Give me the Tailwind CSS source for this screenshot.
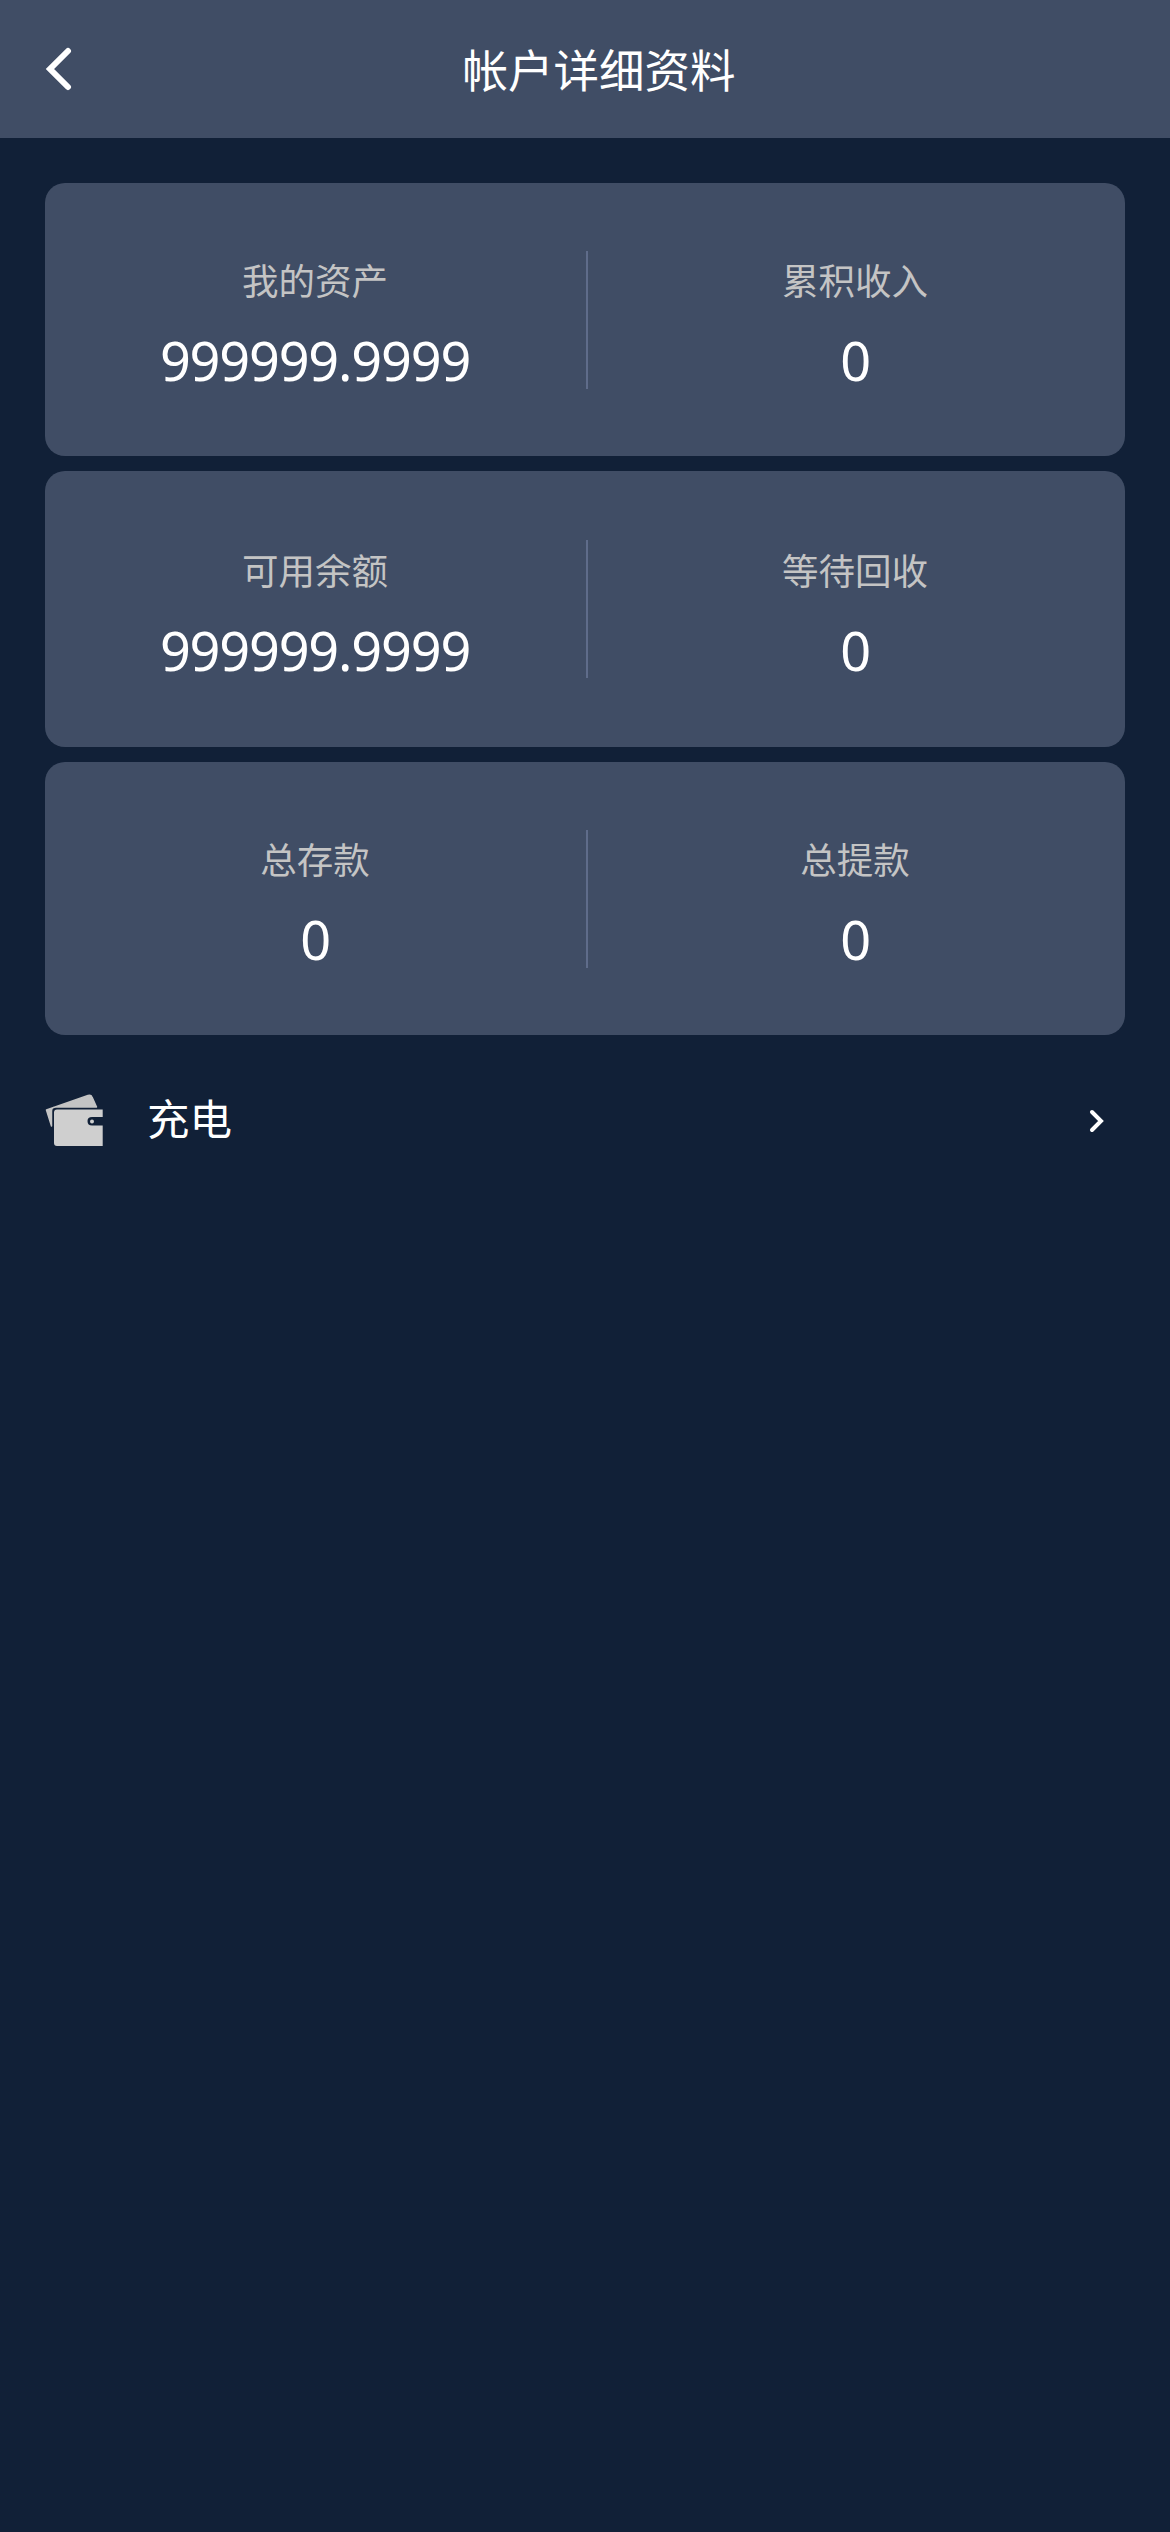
<!DOCTYPE html>
<html lang="zh-CN">
<head>
    <meta charset="UTF-8">
    <meta name="viewport" content="width=device-width, initial-scale=1.0">
    <title>帐户详细资料</title>
    <script src="https://cdn.jsdelivr.net/npm/@tailwindcss/browser@4"></script>
</head>
<body class="bg-[#112037] font-['Noto_Sans','Noto_Sans_CJK_SC',sans-serif]">
    <div class="w-[1170px] h-[2532px] bg-[#112037] overflow-hidden">
        <!-- Header -->
        <header class="h-[138px] bg-[#404d65] flex items-center px-[45px]">
            <svg class="w-[28px] h-[44px] shrink-0" viewBox="0 0 28 44" fill="none" stroke="#fff" stroke-width="6" stroke-linecap="round" stroke-linejoin="miter">
                <path d="M23 4 L5 22 L23 40"/>
            </svg>
            <h1 class="flex-1 text-center text-[45.5px] leading-[60px] text-white font-normal mt-[2px]">帐户详细资料</h1>
        </header>

        <!-- Stat cards -->
        <main class="px-[45px] pt-[45px] flex flex-col gap-[15px]">
            <section class="h-[273px] bg-[#404d65] rounded-[20px] flex items-center">
                <div class="flex-1 text-center pt-[13px]">
                    <p class="text-[36.5px] leading-[50px] text-[#c4c4c4]">我的资产</p>
                    <p class="text-[54px] tracking-[-1.2px] leading-[72px] mt-[18px] text-white">999999.9999</p>
                </div>
                <div class="w-[2px] h-[138px] ml-[1px] -mr-[3px] bg-[#5f6c8a]"></div>
                <div class="flex-1 text-center pt-[13px]">
                    <p class="text-[36.5px] leading-[50px] text-[#c4c4c4]">累积收入</p>
                    <p class="text-[54px] tracking-[-1.2px] leading-[72px] mt-[18px] text-white">0</p>
                </div>
            </section>
            <section class="h-[276px] bg-[#404d65] rounded-[20px] flex items-center">
                <div class="flex-1 text-center pt-[13px]">
                    <p class="text-[36.5px] leading-[50px] text-[#c4c4c4]">可用余额</p>
                    <p class="text-[54px] tracking-[-1.2px] leading-[72px] mt-[18px] text-white">999999.9999</p>
                </div>
                <div class="w-[2px] h-[138px] ml-[1px] -mr-[3px] bg-[#5f6c8a]"></div>
                <div class="flex-1 text-center pt-[13px]">
                    <p class="text-[36.5px] leading-[50px] text-[#c4c4c4]">等待回收</p>
                    <p class="text-[54px] tracking-[-1.2px] leading-[72px] mt-[18px] text-white">0</p>
                </div>
            </section>
            <section class="h-[273px] bg-[#404d65] rounded-[20px] flex items-center">
                <div class="flex-1 text-center pt-[13px]">
                    <p class="text-[36.5px] leading-[50px] text-[#c4c4c4]">总存款</p>
                    <p class="text-[54px] tracking-[-1.2px] leading-[72px] mt-[18px] text-white">0</p>
                </div>
                <div class="w-[2px] h-[138px] ml-[1px] -mr-[3px] bg-[#5f6c8a]"></div>
                <div class="flex-1 text-center pt-[13px]">
                    <p class="text-[36.5px] leading-[50px] text-[#c4c4c4]">总提款</p>
                    <p class="text-[54px] tracking-[-1.2px] leading-[72px] mt-[18px] text-white">0</p>
                </div>
            </section>

            <!-- Recharge row -->
            <a href="#" class="flex items-center h-[62px] mt-[40px]">
                <svg class="w-[60px] h-[54px] shrink-0" viewBox="44 1094 60 54">
                    <path d="M45.5 1110 L87 1095.5 Q90 1094.5 91 1097 L95.5 1107 L55 1107 Q50.5 1107 50.5 1111 L50.5 1126 Z" fill="#c4c4c4" stroke="#c4c4c4" stroke-width="1.5" stroke-linejoin="round"/>
                    <path d="M56 1109.5 L101.7 1109.5 L101.7 1117 L91 1117 Q86.5 1117 86.5 1121 Q86.5 1125.5 91 1125.5 L101.7 1125.5 L101.7 1146 L56 1146 Q53 1146 53 1143 L53 1112.5 Q53 1109.5 56 1109.5 Z" fill="#cfcfcf"/>
                    <circle cx="91" cy="1121.5" r="2" fill="#cfcfcf"/>
                </svg>
                <span class="ml-[42px] -mt-[4px] text-[42.5px] leading-[60px] text-white">充电</span>
                <svg class="ml-auto mr-[18px] w-[20px] h-[28px]" viewBox="0 0 20 28" fill="none" stroke="#fff" stroke-width="4" stroke-linecap="round">
                    <path d="M5 5 L14 14 L5 23"/>
                </svg>
            </a>
        </main>
    </div>
</body>
</html>
